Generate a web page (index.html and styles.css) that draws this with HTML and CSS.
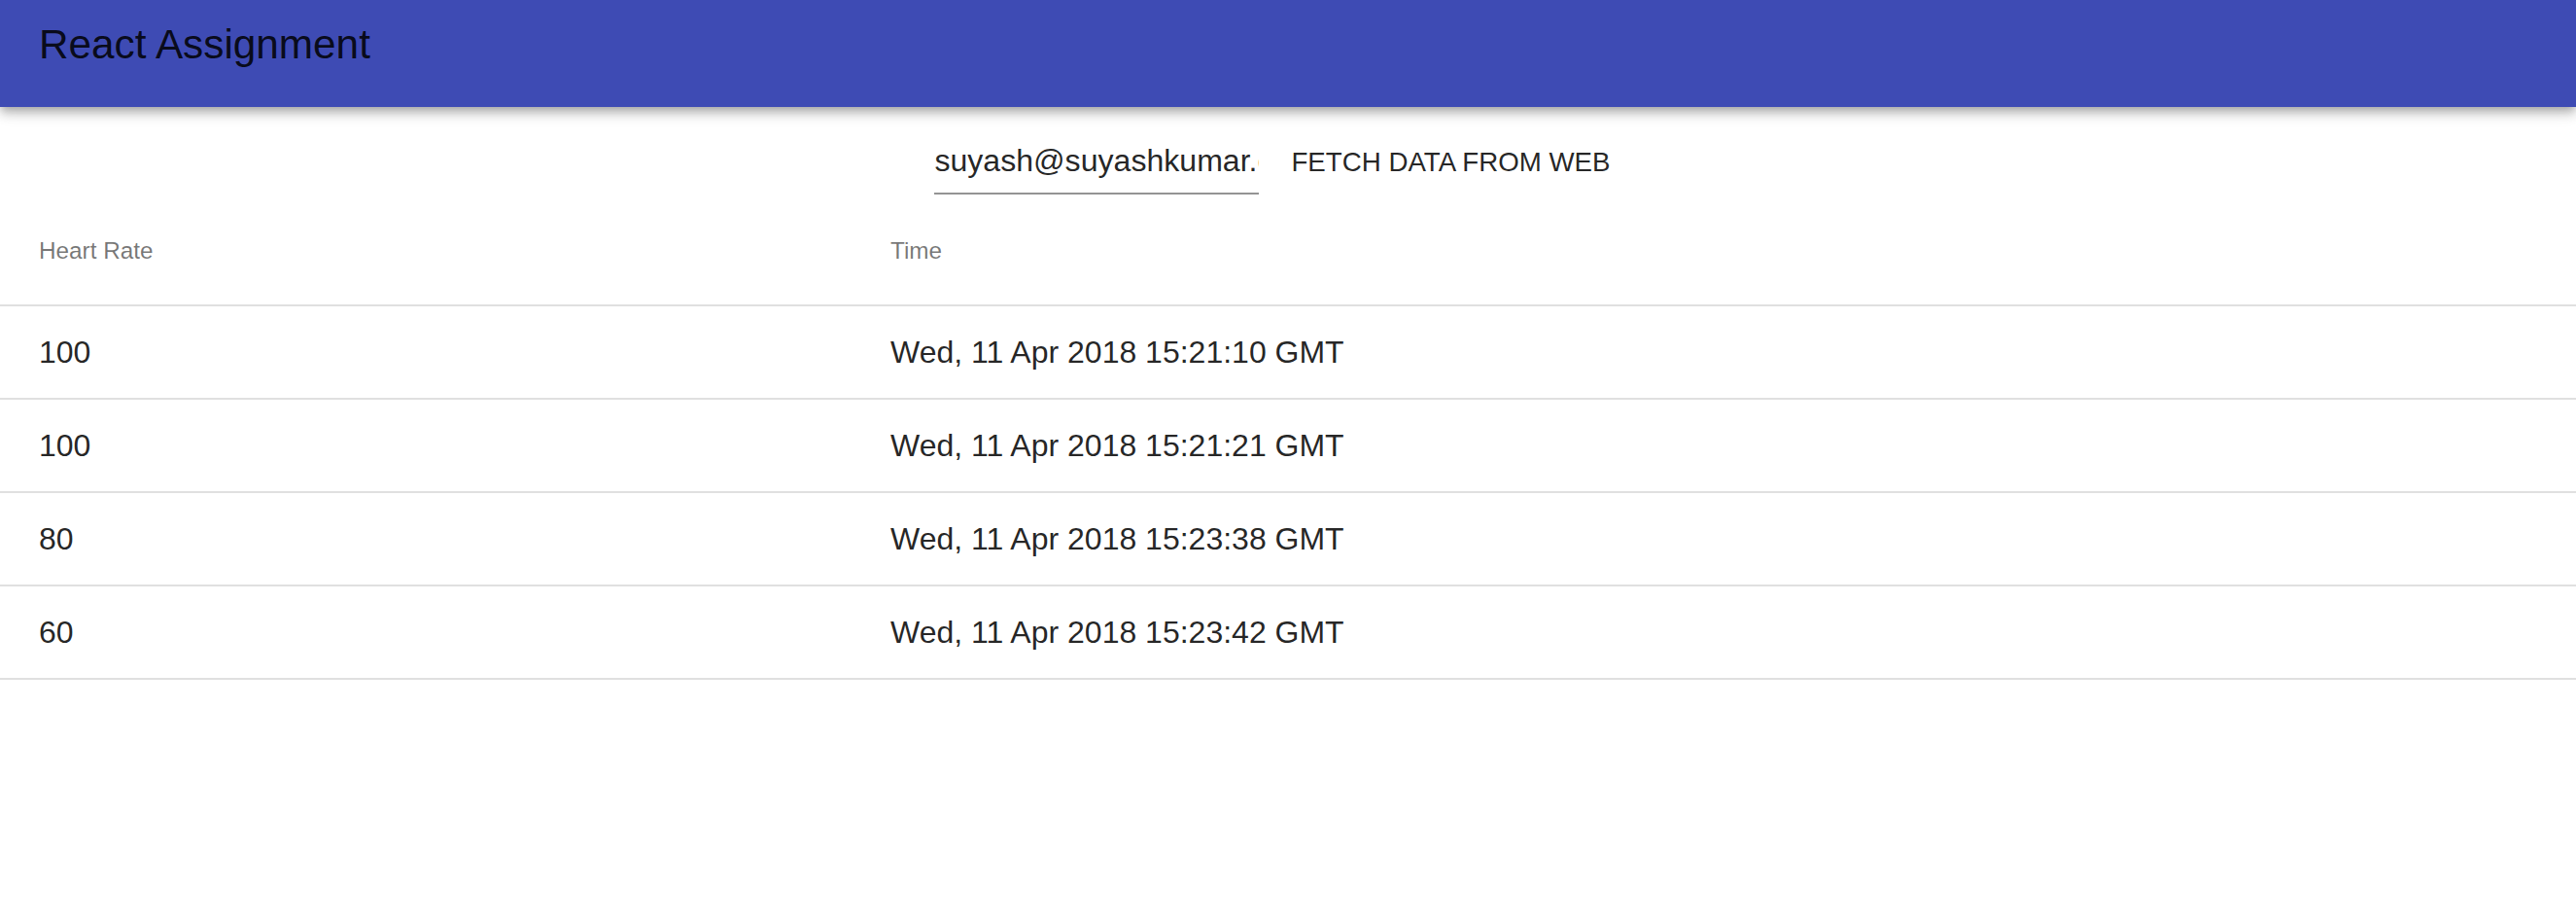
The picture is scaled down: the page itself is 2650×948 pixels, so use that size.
FILE: index.html
```html
<!DOCTYPE html>
<html lang="en">
<head>
<meta charset="utf-8">
<title>React Assignment</title>
<link rel="stylesheet" href="styles.css">
</head>
<body>
<header class="appbar">
  <h1 class="appbar-title">React Assignment</h1>
</header>
<main>
  <div class="controls">
    <div class="input-wrap">
      <input class="email-input" type="text" value="suyash@suyashkumar.com" readonly>
    </div>
    <button class="fetch-btn" type="button">FETCH DATA FROM WEB</button>
  </div>
  <div class="table">
    <div class="row head">
      <div class="cell">Heart Rate</div>
      <div class="cell">Time</div>
    </div>
    <div class="row">
      <div class="cell">100</div>
      <div class="cell">Wed, 11 Apr 2018 15:21:10 GMT</div>
    </div>
    <div class="row">
      <div class="cell">100</div>
      <div class="cell">Wed, 11 Apr 2018 15:21:21 GMT</div>
    </div>
    <div class="row">
      <div class="cell">80</div>
      <div class="cell">Wed, 11 Apr 2018 15:23:38 GMT</div>
    </div>
    <div class="row">
      <div class="cell">60</div>
      <div class="cell">Wed, 11 Apr 2018 15:23:42 GMT</div>
    </div>
  </div>
</main>
</body>
</html>
```
FILE: styles.css
```css
* { box-sizing: border-box; }
html, body {
  margin: 0;
  padding: 0;
  background: #ffffff;
  font-family: "Liberation Sans", Arial, Helvetica, sans-serif;
}
.appbar {
  height: 110px;
  background: #3e4bb4;
  padding: 25px 0 0 40px;
  box-shadow: 0 4px 8px -2px rgba(0,0,0,0.2), 0 8px 10px 0 rgba(0,0,0,0.14), 0 2px 20px 0 rgba(0,0,0,0.12);
  position: relative;
  z-index: 2;
}
.appbar-title {
  margin: 0;
  font-size: 42.3px;
  line-height: 42px;
  font-weight: 400;
  color: rgba(0,0,0,0.87);
}
.controls {
  display: flex;
  justify-content: center;
  align-items: baseline;
  padding-top: 36px;
}
.input-wrap {
  width: 334px;
  border-bottom: 2px solid #949494;
  padding-bottom: 14px;
}
.email-input {
  display: block;
  width: 100%;
  border: 0;
  outline: none;
  padding: 0;
  margin: 0;
  background: transparent;
  font-family: "Liberation Sans", Arial, Helvetica, sans-serif;
  font-size: 32.1px;
  line-height: 38px;
  height: 38px;
  color: rgba(0,0,0,0.87);
}
.fetch-btn {
  border: 0;
  background: transparent;
  padding: 0 32px 0 33px;
  margin: 0;
  font-family: "Liberation Sans", Arial, Helvetica, sans-serif;
  font-size: 27.7px;
  line-height: 38px;
  color: rgba(0,0,0,0.87);
  cursor: pointer;
}
.table {
  margin-top: 3px;
}
.row {
  display: grid;
  grid-template-columns: 876px 1fr;
  height: 96px;
  border-bottom: 2px solid #e0e0e0;
  align-items: center;
  font-size: 32px;
  line-height: 1;
  color: rgba(0,0,0,0.87);
}
.row.head {
  height: 112px;
  font-size: 24.3px;
  color: rgba(0,0,0,0.54);
}
.cell {
  padding-left: 40px;
}
```
